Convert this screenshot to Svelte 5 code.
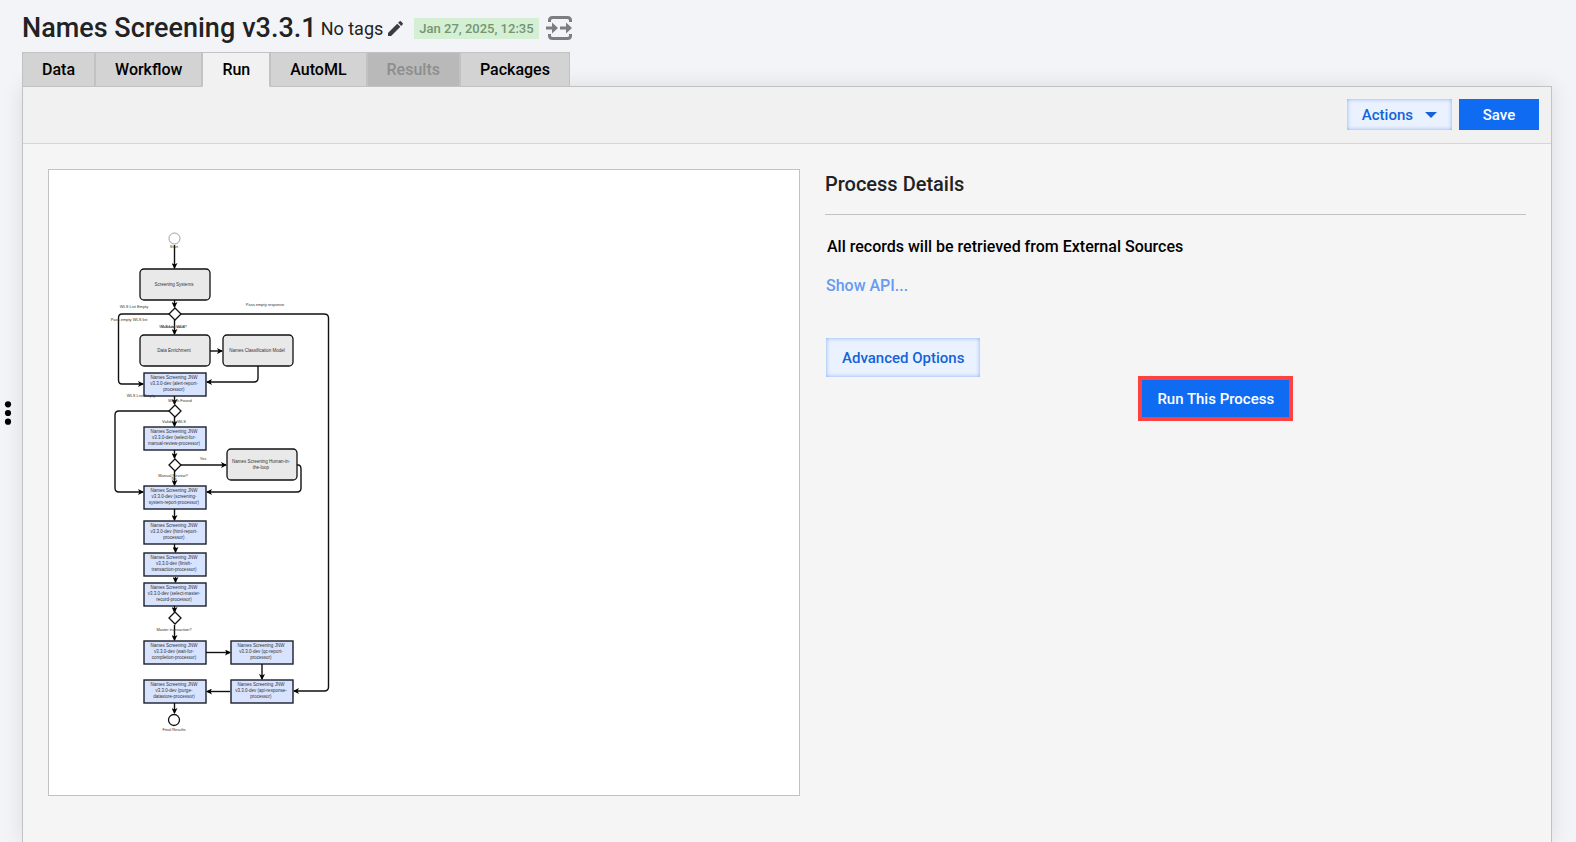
<script lang="ts">
  interface Tab {
    label: string;
    disabled?: boolean;
  }

  interface FlowNode {
    x: number;
    y: number;
    lines: string[];
  }

  interface FlowLabel {
    x: number;
    y: number;
    text: string;
  }

  const tabs: Tab[] = [
    { label: 'Data' },
    { label: 'Workflow' },
    { label: 'Run' },
    { label: 'AutoML' },
    { label: 'Results', disabled: true },
    { label: 'Packages' },
  ];

  let activeTab = $state('Run');

  /** Rounded grey steps, 70 x 31 */
  const systems: FlowNode[] = [
    { x: 140, y: 269, lines: ['Screening Systems'] },
    { x: 140, y: 335, lines: ['Data Enrichment'] },
    { x: 223, y: 335, lines: ['Names Classification Model'] },
    { x: 227, y: 449, lines: ['Names Screening Human-in-', 'the-loop'] },
  ];

  /** Blue processor steps, 62 x 23 */
  const processors: FlowNode[] = [
    { x: 144, y: 373, lines: ['v3.3.0-dev (alert-report-', 'processor)'] },
    { x: 144, y: 427, lines: ['v3.3.0-dev (select-for-', 'manual-review-processor)'] },
    { x: 144, y: 486, lines: ['v3.3.0-dev (screening-', 'system-report-processor)'] },
    { x: 144, y: 521, lines: ['v3.3.0-dev (html-report-', 'processor)'] },
    { x: 144, y: 553, lines: ['v3.3.0-dev (finish-', 'transaction-processor)'] },
    { x: 144, y: 583, lines: ['v3.3.0-dev (select-master-', 'record-processor)'] },
    { x: 144, y: 641, lines: ['v3.3.0-dev (wait-for-', 'completion-processor)'] },
    { x: 231, y: 641, lines: ['v3.3.0-dev (qc-report-', 'processor)'] },
    { x: 144, y: 680, lines: ['v3.3.0-dev (purge-', 'datastore-processor)'] },
    { x: 231, y: 680, lines: ['v3.3.0-dev (api-response-', 'processor)'] },
  ];

  /** Centre height of each decision on the main line */
  const decisions = [314, 411, 465, 618];

  const edges = [
    'M174.5 245V268',
    'M174.5 300V307',
    'M174.5 320V334',
    'M210 351H222',
    'M258 366V378Q258 382 254 382H207',
    'M169 314H122Q118.5 314 118.5 318V380Q118.5 384 122 384H143',
    'M181 314H324Q328.5 314 328.5 318V687Q328.5 691 324 691H294',
    'M174.5 396V404',
    'M174.5 417V426',
    'M169 411H119Q115 411 115 415V488Q115 492 119 492H143',
    'M174.5 450V458',
    'M181 465H226',
    'M174.5 471V485',
    'M297 465H298Q301 465 301 469V488Q301 492 297 492H207',
    'M174.5 509V520',
    'M174.5 544V548H175.5V552',
    'M175.5 577V582',
    'M174.5 606V612',
    'M174.5 625V640',
    'M206 652.5H230',
    'M262 664V679',
    'M230 691.5H207',
    'M174.5 703V713',
  ];

  const labels: FlowLabel[] = [
    { x: 174, y: 248, text: 'Start' },
    { x: 134, y: 308, text: 'WLS List Empty' },
    { x: 265, y: 306, text: 'Pass empty response' },
    { x: 129, y: 321, text: 'Pass empty WLS list' },
    { x: 173, y: 328, text: 'Validate WLS' },
    { x: 173, y: 328, text: 'WLS List valid?' },
    { x: 141, y: 397, text: 'WLS List Empty' },
    { x: 180, y: 402, text: 'Match Found' },
    { x: 174, y: 423, text: 'Validate WLS' },
    { x: 203, y: 460, text: 'Yes' },
    { x: 173, y: 477, text: 'Manual Review?' },
    { x: 174, y: 480, text: 'No' },
    { x: 174, y: 631, text: 'Master transaction?' },
    { x: 174, y: 731, text: 'Final Results' },
  ];
</script>

<div class="page">
  <aside class="rail">
    <button class="rail-btn" aria-label="Open side menu">
      <svg viewBox="0 0 8 24" width="8" height="24">
        <circle cx="4" cy="3.3" r="3.1" />
        <circle cx="4" cy="12" r="3.1" />
        <circle cx="4" cy="20.7" r="3.1" />
      </svg>
    </button>
  </aside>

  <main class="main">
    <header class="header">
      <h1>Names Screening<span class="version">v3.3.1</span></h1>
      <span class="tags">No tags</span>
      <button class="icon-btn edit" aria-label="Edit tags">
        <svg viewBox="3 3 18 18" width="15" height="15" fill="#3c3c3c">
          <path d="M3 17.25V21h3.75L17.81 9.94l-3.75-3.75L3 17.25zM20.71 7.04a1 1 0 0 0 0-1.41l-2.34-2.34a1 1 0 0 0-1.41 0l-1.83 1.83 3.75 3.75 1.83-1.83z" />
        </svg>
      </button>
      <span class="date">Jan 27, 2025, 12:35</span>
      <button class="icon-btn" aria-label="Inputs and outputs">
        <svg viewBox="0 0 26 24" width="26" height="24">
          <path d="M3.5 6V4.5Q3.5 1.5 6.5 1.5H21.5Q24.5 1.5 24.5 4.5V6M3.5 18V19.5Q3.5 22.5 6.5 22.5H21.5Q24.5 22.5 24.5 19.5V18" fill="none" stroke="#7c7d82" stroke-width="3" />
          <path d="M0 10.5H6V6.5L12 12L6 17.5V13.5H0zM14 10.5H20V6.5L26 12L20 17.5V13.5H14z" fill="#7c7d82" />
        </svg>
      </button>
    </header>

    <nav class="tabs" role="tablist">
      {#each tabs as tab}
        <button
          class="tab"
          class:active={tab.label === activeTab}
          role="tab"
          aria-selected={tab.label === activeTab}
          disabled={tab.disabled}
          onclick={() => (activeTab = tab.label)}
        >
          {tab.label}
        </button>
      {/each}
    </nav>

    <section class="panel">
      <div class="toolbar">
        <button class="btn light">
          Actions
          <svg viewBox="0 0 12 6" width="12" height="6"><path d="M0 0H12L6 6z" fill="#1464d8" /></svg>
        </button>
        <button class="btn primary save">Save</button>
      </div>

      <div class="content">
        <div class="canvas">
          <svg viewBox="98 340 1500 1250" role="img" aria-label="Workflow diagram">
            <defs>
              <marker id="arrow" viewBox="0 0 6 6" refX="5" refY="3" markerWidth="6" markerHeight="6" markerUnits="userSpaceOnUse" orient="auto">
                <path d="M0 0L6 3L0 6L1.5 3z" />
              </marker>
            </defs>

            <g transform="scale(2)">
              <circle class="start" cx="174.5" cy="238.5" r="5.5" />
              <circle class="end" cx="174" cy="720" r="5.5" />

              {#each systems as node}
                <rect class="system" x={node.x} y={node.y} width="70" height="31" rx="4" />
              {/each}

              {#each processors as node}
                <rect class="processor" x={node.x} y={node.y} width="62" height="23" />
              {/each}

              {#each edges as edge}
                <path class="edge" d={edge} marker-end="url(#arrow)" />
              {/each}

              {#each decisions as y}
                <path class="decision" d={`M175 ${y - 6}l6 6l-6 6l-6 -6z`} />
              {/each}
            </g>

            {#each systems as node}
              {#each node.lines as line, i}
                <text class="node-text" x={(node.x + 34) * 2} y={(node.y + (node.lines.length > 1 ? 14 : 17) + i * 6) * 2}>{line}</text>
              {/each}
            {/each}

            {#each processors as node}
              {#each ['Names Screening JNW', ...node.lines] as line, i}
                <text class="node-text" x={(node.x + 30) * 2} y={(node.y + 6 + i * 6) * 2}>{line}</text>
              {/each}
            {/each}

            {#each labels as label}
              <text class="label" x={label.x * 2} y={label.y * 2}>{label.text}</text>
            {/each}
          </svg>
        </div>

        <div class="details">
          <h2>Process Details</h2>
          <div class="details-body">
            <p class="note">All records will be retrieved from External Sources</p>
            <a class="api-link" href="#api">Show API...</a>
            <div class="run-row">
              <button class="btn light tall">Advanced Options</button>
              <div class="highlight">
                <button class="btn primary run">Run This Process</button>
              </div>
            </div>
          </div>
        </div>
      </div>
    </section>
  </main>
</div>

<style>
  :global(body) {
    background: #f2f4f8;
  }

  .page {
    display: flex;
    min-height: 100vh;
    font-family: Roboto, 'Liberation Sans', sans-serif;
    color: #222;
  }

  button {
    font-family: inherit;
    cursor: pointer;
  }

  .rail {
    display: flex;
    align-items: center;
    width: 22px;
    height: 100vh;
    padding-bottom: 16px;
    box-sizing: border-box;
  }

  .rail-btn {
    position: relative;
    z-index: 1;
    display: flex;
    padding: 0 4px;
    background: transparent;
    border: none;
  }

  .main {
    flex: 1;
    display: flex;
    flex-direction: column;
    min-width: 0;
    padding-right: 24px;
  }

  .header {
    position: relative;
    z-index: 1;
    display: flex;
    align-items: center;
    height: 52px;
    padding-top: 4px;
    box-sizing: border-box;
    background: #f2f4f8;
  }

  h1 {
    margin: 0;
    font-size: 27px;
    font-weight: 500;
    line-height: 32px;
    white-space: nowrap;
  }

  .version {
    margin-left: 7px;
  }

  .tags {
    margin-left: 4px;
    font-size: 18px;
  }

  .icon-btn {
    display: flex;
    padding: 0;
    background: transparent;
    border: none;
  }

  .edit {
    margin-left: 5px;
  }

  .date {
    margin: 0 7px 0 11px;
    padding: 0 5px;
    background: #d4efd4;
    color: #73966f;
    font-size: 13px;
    font-weight: 500;
    line-height: 21px;
  }

  .tabs {
    position: relative;
    z-index: 1;
    display: flex;
    margin-bottom: -1px;
  }

  .tab {
    height: 35px;
    padding: 0 19px;
    background: #d3d3d3;
    border: 1px solid #c2c2c2;
    color: #000;
    font-size: 16px;
    font-weight: 500;
  }

  .tab.active {
    background: #f1f1f1;
    border-bottom-color: #f1f1f1;
  }

  .tab:disabled {
    background: #b9b9b9;
    color: #8e8e8e;
    cursor: default;
  }

  .panel {
    flex: 1;
    background: #f5f5f5;
    border: 1px solid #c2c2c2;
    border-bottom: none;
    box-shadow: 0 0 20px rgba(0, 0, 0, 0.1);
  }

  .toolbar {
    display: flex;
    align-items: center;
    justify-content: flex-end;
    gap: 7px;
    height: 57px;
    padding: 0 12px 1px;
    box-sizing: border-box;
    background: #f1f1f1;
    border-bottom: 1px solid #d6d6d6;
  }

  .btn {
    display: flex;
    align-items: center;
    justify-content: center;
    gap: 12px;
    height: 31px;
    padding: 0 15px;
    border: none;
    font-size: 15px;
    font-weight: 500;
    white-space: nowrap;
  }

  .btn.light {
    background: #ebf2ff;
    color: #1464d8;
    box-shadow: inset 0 0 4px #7fadf8;
  }

  .btn.primary {
    background: #106bf3;
    color: #fff;
  }

  .btn.light svg {
    display: block;
  }

  .save {
    min-width: 80px;
  }

  .btn.tall {
    height: 39px;
    padding: 0 16px;
  }

  .content {
    display: grid;
    grid-template-columns: 752fr 701fr;
    gap: 25px;
    align-items: start;
    padding: 25px;
  }

  .canvas {
    background: #fff;
    border: 1px solid #c2c2c2;
  }

  .canvas svg {
    display: block;
    width: 100%;
    font-family: 'Liberation Sans', sans-serif;
  }

  .start {
    fill: #fff;
    stroke: #777;
    stroke-width: 0.7;
  }

  .end {
    fill: #fff;
    stroke: #111;
    stroke-width: 1.3;
  }

  .system {
    fill: #e9e9e9;
    stroke: #111;
    stroke-width: 1.3;
  }

  .processor {
    fill: #d7e3ff;
    stroke: #1c1f28;
    stroke-width: 1.4;
  }

  .decision {
    fill: #fff;
    stroke: #111;
    stroke-width: 1.3;
  }

  .edge {
    fill: none;
    stroke: #111;
    stroke-width: 1.4;
  }

  .node-text {
    fill: #333;
    font-size: 9px;
    text-anchor: middle;
  }

  .label {
    fill: #333;
    font-size: 8px;
    text-anchor: middle;
  }

  h2 {
    margin: 0 0 20px;
    padding: 3px 0 18px;
    border-bottom: 1px solid #c2c2c2;
    font-size: 20px;
    font-weight: 500;
    line-height: 24px;
  }

  .details-body {
    padding-left: 1px;
  }

  .note {
    margin: 0 0 15px 1px;
    color: #000;
    font-size: 16px;
    font-weight: 500;
    line-height: 24px;
  }

  .api-link {
    display: inline-block;
    color: #659bf0;
    font-size: 16px;
    font-weight: 500;
    line-height: 24px;
    text-decoration: none;
  }

  .run-row {
    display: flex;
    align-items: flex-start;
    gap: 158px;
    margin-top: 40px;
  }

  .highlight {
    margin-top: 38px;
    border: 4px solid #ff4141;
  }

  .run {
    height: 37px;
  }
</style>
